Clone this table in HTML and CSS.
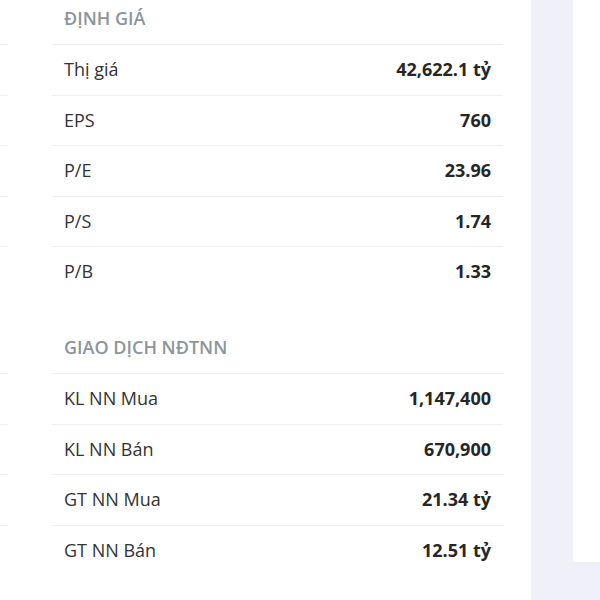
FILE: index.html
```html
<!DOCTYPE html>
<html lang="vi">
<head>
  <meta charset="UTF-8" />
  <title>Định giá</title>
  <meta name="viewport" content="width=device-width, initial-scale=1" />
  <link rel="stylesheet" href="styles.css">
</head>
<body>
  <div class="wrap">
    <div class="panel">
      <!-- Previous column, cut off at the left edge -->
      <div class="col cut" aria-hidden="true">
        <div class="sec">
          <h3>&nbsp;</h3>
          <div class="row"></div>
          <div class="row"></div>
          <div class="row"></div>
          <div class="row"></div>
          <div class="row"></div>
        </div>
        <div class="sec">
          <h3>&nbsp;</h3>
          <div class="row"></div>
          <div class="row"></div>
          <div class="row"></div>
          <div class="row"></div>
        </div>
      </div>

      <div class="col">
        <div class="sec">
          <h3>Định giá</h3>
          <div class="row"><span>Thị giá</span><b>42,622.1 tỷ</b></div>
          <div class="row"><span>EPS</span><b>760</b></div>
          <div class="row"><span>P/E</span><b>23.96</b></div>
          <div class="row"><span>P/S</span><b>1.74</b></div>
          <div class="row"><span>P/B</span><b>1.33</b></div>
        </div>
        <div class="sec">
          <h3>Giao dịch NĐTNN</h3>
          <div class="row"><span>KL NN Mua</span><b>1,147,400</b></div>
          <div class="row"><span>KL NN Bán</span><b>670,900</b></div>
          <div class="row"><span>GT NN Mua</span><b>21.34 tỷ</b></div>
          <div class="row"><span>GT NN Bán</span><b>12.51 tỷ</b></div>
        </div>
      </div>
    </div>
    <div class="side"></div>
  </div>
</body>
</html>
```

FILE: styles.css
```css
:root {
  --bg: #eff0f8;
  --line: #efefef;
  --head: #8d959c;
  --txt: #333;
  --val: #262626;
  font-family: 'Open Sans', 'Noto Sans', sans-serif;
}
* { box-sizing: border-box; margin: 0; padding: 0; }
body {
  background: var(--bg);
  width: 600px;
  height: 600px;
  overflow: hidden;
}
.wrap {
  display: flex;
  align-items: flex-start;
  height: 600px;
}
.panel {
  background: #fff;
  height: 600px;
  display: grid;
  grid-template-columns: 8px 451px;
  column-gap: 44px;
  padding-right: 28px;
  flex-shrink: 0;
}
.side {
  background: #fff;
  margin-left: 42px;
  width: 40px;
  height: 562px;
  flex-shrink: 0;
}
.col { overflow: hidden; }
.sec + .sec { margin-top: 32.5px; }
h3 {
  font-size: 18px;
  font-weight: 600;
  line-height: 27px;
  text-transform: uppercase;
  color: var(--head);
  padding: 5px 12px 12px;
}
.row {
  height: 50.5px;
  border-top: 1px solid var(--line);
  display: flex;
  align-items: center;
  justify-content: space-between;
  padding: 0 12px;
  font-size: 18px;
  line-height: 27px;
  color: var(--txt);
}
.row b { font-weight: 700; color: var(--val); }
```
